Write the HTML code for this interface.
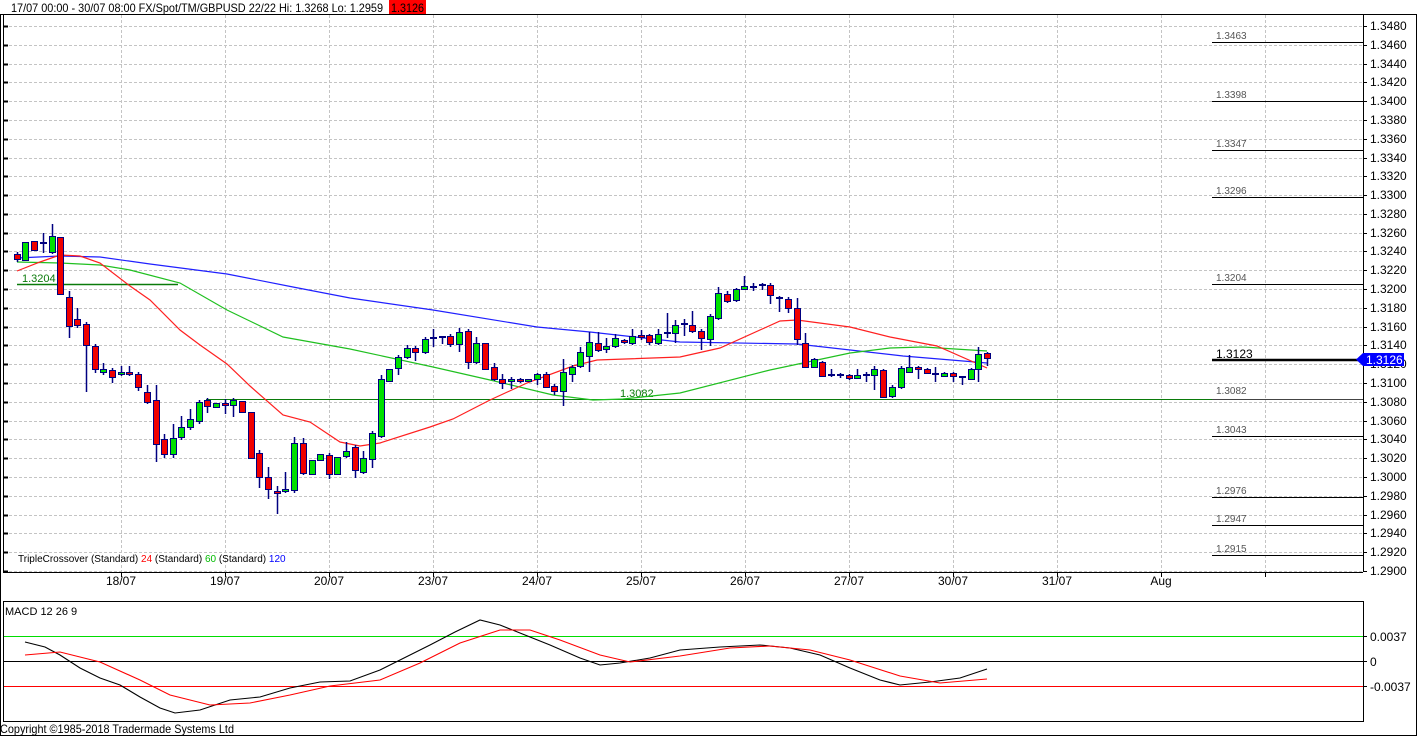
<!DOCTYPE html>
<html><head><meta charset="utf-8"><style>
html,body{margin:0;padding:0;background:#fff;}
svg{display:block;font-family:"Liberation Sans",sans-serif;}
</style></head><body>
<svg id="s" width="1418" height="737" viewBox="0 0 1418 737" xmlns="http://www.w3.org/2000/svg">
<rect x="0" y="0" width="1418" height="737" fill="#fff"/>
<g id="grid"></g>
<rect x="0.5" y="14.5" width="1416" height="721" fill="none" stroke="#000"/>
<line x1="3.5" y1="15" x2="3.5" y2="572" stroke="#000"/>
<line x1="3" y1="572.5" x2="1363" y2="572.5" stroke="#000"/>
<line x1="1363.5" y1="15" x2="1363.5" y2="572" stroke="#000"/>
<rect x="3.5" y="601.5" width="1360" height="120" fill="none" stroke="#000"/>
<text x="11" y="12" font-size="12" fill="#000" textLength="372" lengthAdjust="spacingAndGlyphs">17/07 00:00 - 30/07 08:00  FX/Spot/TM/GBPUSD 22/22  Hi: 1.3268 Lo: 1.2959</text>
<rect x="389" y="0" width="37" height="14" fill="#f00"/>
<text x="391" y="12" font-size="12" fill="#000" textLength="33" lengthAdjust="spacingAndGlyphs">1.3126</text>
<g stroke="#000" stroke-width="1">
<line x1="1212" y1="42.5" x2="1363" y2="42.5"/><line x1="1212" y1="101.5" x2="1363" y2="101.5"/>
<line x1="1212" y1="150.5" x2="1363" y2="150.5"/><line x1="1212" y1="197.5" x2="1363" y2="197.5"/>
<line x1="1212" y1="284.5" x2="1363" y2="284.5"/><line x1="1212" y1="436.5" x2="1363" y2="436.5"/>
<line x1="1212" y1="497.5" x2="1363" y2="497.5"/><line x1="1212" y1="525.5" x2="1363" y2="525.5"/>
<line x1="1212" y1="555.5" x2="1363" y2="555.5"/>
<line x1="1212" y1="360" x2="1363" y2="360" stroke-width="2.5"/>
<line x1="212" y1="399.5" x2="1363" y2="399.5" stroke="#444"/>
</g>
<line x1="206" y1="399.5" x2="1212" y2="399.5" stroke="#0a7a0a"/>
<line x1="17" y1="284.5" x2="178" y2="284.5" stroke="#0a7a0a" stroke-width="1.5"/>
<g font-size="10" fill="#555">
<text x="1216" y="39">1.3463</text><text x="1216" y="98">1.3398</text><text x="1216" y="147">1.3347</text>
<text x="1216" y="194">1.3296</text><text x="1216" y="281">1.3204</text><text x="1216" y="394">1.3082</text>
<text x="1216" y="433">1.3043</text><text x="1216" y="494">1.2976</text><text x="1216" y="522">1.2947</text>
<text x="1216" y="552">1.2915</text>
</g>
<text x="1216" y="358" font-size="12" fill="#000">1.3123</text>
<text x="22" y="282" font-size="11" fill="#0a7a0a">1.3204</text>
<text x="620" y="397" font-size="11" fill="#0a7a0a">1.3082</text>
<polyline fill="none" stroke="#2020ff" stroke-width="1.2" points="17,258 60,256 100,257 150,264 227,274 293,287 350,298 433,310 537,327 590,332 680,342 797,344 903,356 987,363"/>
<polyline fill="none" stroke="#20c020" stroke-width="1.2" points="17,262 60,263 100,265 130,270 180,283 227,310 283,337 350,349 433,367 490,380 553,395 593,400 623,399 680,393 770,370 803,363 850,353 890,348 923,347 987,351"/>
<polyline fill="none" stroke="#ff2020" stroke-width="1.2" points="17,271 40,262 60,255 80,256 100,263 130,286 150,300 180,330 200,345 227,364 250,386 283,415 310,422 340,442 360,446 380,443 430,427 453,419 490,400 527,383 573,366 597,360 680,357 720,348 780,321 797,320 850,327 890,337 937,346 987,368"/>
<g id="candles"></g>
<text x="18" y="562" font-size="10" fill="#000">TripleCrossover (Standard) <tspan fill="#f00">24</tspan> (Standard) <tspan fill="#0b0">60</tspan> (Standard) <tspan fill="#00f">120</tspan></text>
<g id="ylab" font-size="12" fill="#000">
<text x="1370" y="30">1.3480</text><text x="1370" y="49">1.3460</text><text x="1370" y="68">1.3440</text><text x="1370" y="86">1.3420</text><text x="1370" y="105">1.3400</text><text x="1370" y="124">1.3380</text><text x="1370" y="143">1.3360</text><text x="1370" y="162">1.3340</text><text x="1370" y="180">1.3320</text><text x="1370" y="199">1.3300</text><text x="1370" y="218">1.3280</text><text x="1370" y="237">1.3260</text><text x="1370" y="255">1.3240</text><text x="1370" y="274">1.3220</text><text x="1370" y="293">1.3200</text><text x="1370" y="312">1.3180</text><text x="1370" y="331">1.3160</text><text x="1370" y="349">1.3140</text><text x="1370" y="368">1.3120</text><text x="1370" y="387">1.3100</text><text x="1370" y="406">1.3080</text><text x="1370" y="425">1.3060</text><text x="1370" y="443">1.3040</text><text x="1370" y="462">1.3020</text><text x="1370" y="481">1.3000</text><text x="1370" y="500">1.2980</text><text x="1370" y="519">1.2960</text><text x="1370" y="537">1.2940</text><text x="1370" y="556">1.2920</text><text x="1370" y="575">1.2900</text>
</g>
<path d="M1356,359.5 L1363,353 L1404,353 L1404,366 L1363,366 Z" fill="#0000ff"/>
<text x="1366" y="364" font-size="12" fill="#fff">1.3126</text>
<g font-size="12" fill="#000" text-anchor="middle">
<text x="121" y="585">18/07</text><text x="225" y="585">19/07</text><text x="329" y="585">20/07</text><text x="433" y="585">23/07</text><text x="537" y="585">24/07</text><text x="641" y="585">25/07</text><text x="745" y="585">26/07</text><text x="849" y="585">27/07</text><text x="953" y="585">30/07</text><text x="1057" y="585">31/07</text><text x="1161" y="585">Aug</text>
</g>
<text x="5" y="615" font-size="11" fill="#000">MACD 12 26 9</text>
<line x1="4" y1="636.5" x2="1363" y2="636.5" stroke="#00dd00"/>
<line x1="4" y1="661.5" x2="1363" y2="661.5" stroke="#000"/>
<line x1="4" y1="686.5" x2="1363" y2="686.5" stroke="#f00"/>
<g stroke="#000" stroke-width="1"><line x1="1363" y1="636.5" x2="1367" y2="636.5"/><line x1="1363" y1="661.5" x2="1367" y2="661.5"/><line x1="1363" y1="686.5" x2="1367" y2="686.5"/></g>
<g font-size="12" fill="#000"><text x="1370" y="641">0.0037</text><text x="1370" y="666">0</text><text x="1370" y="691">-0.0037</text></g>
<polyline fill="none" stroke="#000" stroke-width="1.1" points="25,642 45,647 60,655 80,668 100,678 120,685 140,697 160,708 175,713 200,710 230,700 260,697 290,688 320,682 350,681 380,670 400,660 430,645 455,632 480,620 500,625 520,633 550,645 580,658 600,665 620,663 650,658 680,650 720,647 760,645 790,648 820,655 850,668 880,680 900,685 930,682 960,678 987,669"/>
<polyline fill="none" stroke="#f00" stroke-width="1.1" points="25,655 60,652 100,662 140,680 170,695 210,705 250,703 290,695 330,686 380,680 420,663 460,643 500,630 530,630 560,640 600,655 630,662 680,656 730,648 770,646 810,650 850,660 900,676 940,683 987,679"/>
<text x="0" y="733" font-size="12" fill="#000" textLength="234" lengthAdjust="spacingAndGlyphs">Copyright ©1985-2018 Tradermade Systems Ltd</text>
</svg>
<script>
(function(){
var NS="http://www.w3.org/2000/svg";
function el(p,t,a){var e=document.createElementNS(NS,t);for(var k in a)e.setAttribute(k,a[k]);p.appendChild(e);return e;}
var g=document.getElementById("grid");
for(var i=0;i<30;i++){var y=Math.round(26+i*18.79)+0.5;
 el(g,"line",{x1:4,y1:y,x2:1363,y2:y,stroke:"#c4c4c4","stroke-dasharray":"3,2"});
 el(g,"line",{x1:4,y1:y,x2:8,y2:y,stroke:"#000","stroke-width":2});
 el(g,"line",{x1:1363,y1:y,x2:1367,y2:y,stroke:"#000"});}
for(var x=121;x<1363;x+=104){
 el(g,"line",{x1:x+0.5,y1:15,x2:x+0.5,y2:572,stroke:"#c4c4c4","stroke-dasharray":"3,2"});
 el(g,"line",{x1:x+0.5,y1:572,x2:x+0.5,y2:577,stroke:"#000"});}
var d=[[17,254,259,252,262],[25,260,242],[34,241,250],[43,243,243,233,253],[52,252,236,224,254],[60,237,294],[69,297,326,291,338],[77,319,325,308,328],[86,324,345,322,392],[95,346,369,344,373],[103,372,369,363,375],[112,370,377,368,383],[121,374,372,366,376],[129,372,374,366,376],[138,374,387,372,391],[147,392,402,385,404],[156,400,444,385,462],[164,439,454,434,458],[173,454,438,424,458],[181,437,427,416,440],[190,427,419,409,430],[199,421,402,400,424],[207,400,406,398,413],[216,407,403],[225,403,405,399,414],[233,405,400,398,417],[242,401,412],[251,412,458],[259,453,477,450,488],[268,477,489,467,499],[277,491,493,486,514],[285,491,489,472,493],[294,490,443,437,493],[303,443,473,438,475],[312,474,460],[320,460,454],[329,455,474,453,479],[337,474,457],[346,456,451,442,458],[355,447,470,445,478],[363,472,458,451,474],[372,459,433,431,468],[381,436,379,375,438],[389,381,369],[398,368,357,355,375],[407,357,348,345,359],[415,348,352,346,361],[425,352,339,337,354],[433,338,338,329,347],[442,337,337,336,344],[450,336,344,334,347],[459,344,332,328,352],[468,331,362,329,369],[476,362,343,337,364],[485,343,369],[494,367,379,363,381],[502,379,383,374,389],[511,381,379,377,389],[520,379,381,378,383],[528,381,379],[537,379,374,373,385],[546,374,387,372,388],[554,386,391,384,395],[563,391,372,359,406],[572,374,367,365,382],[580,366,352,347,368],[589,356,342,332,372],[598,343,350,332,352],[606,349,346,338,353],[615,346,338,334,348],[624,340,342,339,344],[632,343,336,329,345],[641,335,337,330,340],[649,335,342,334,345],[658,343,334,329,345],[667,333,333,313,338],[675,333,325,320,343],[684,324,324,319,336],[692,325,331,311,333],[701,331,338,329,350],[710,339,316,314,346],[718,318,293,287,320],[727,294,301,291,303],[736,300,289,288,302],[744,289,286,276,290],[753,287,287,283,291],[762,285,285,283,290],[770,285,295,283,304],[779,298,298,296,312],[788,299,308,297,313],[797,308,339,298,345],[805,343,367,333,368],[814,367,359,358,368],[822,362,376,361,377],[831,375,375,369,377],[840,375,375,373,378],[849,375,378,374,380],[857,378,375,369,379],[866,375,375,372,382],[874,375,369,366,390],[883,370,397,369,398],[892,396,387,385,398],[901,387,368,366,389],[909,372,367,355,373],[918,367,369,366,379],[927,369,373,368,374],[935,374,375,367,382],[944,376,373,372,377],[953,373,376,372,382],[962,377,377,376,385],[971,379,369,368,380],[978,369,354,347,382],[987,353,358,352,366]];
var c=document.getElementById("candles");
d.forEach(function(a){var x=a[0],o=a[1],cl=a[2],top=Math.min(o,cl),bot=Math.max(o,cl);
 var h=a.length>3?a[3]:top,l=a.length>3?a[4]:bot;
 el(c,"line",{x1:x+0.5,y1:h,x2:x+0.5,y2:l,stroke:"#000080","stroke-width":1.5});
 if(bot-top<2){el(c,"rect",{x:x-3,y:top-1,width:7,height:2,fill:"#000080"});}
 else el(c,"rect",{x:x-2.5,y:top+0.5,width:6,height:bot-top,fill:cl<o?"#00e000":"#f00000",stroke:"#000080","stroke-width":1});
});
})();
</script>
</body></html>
